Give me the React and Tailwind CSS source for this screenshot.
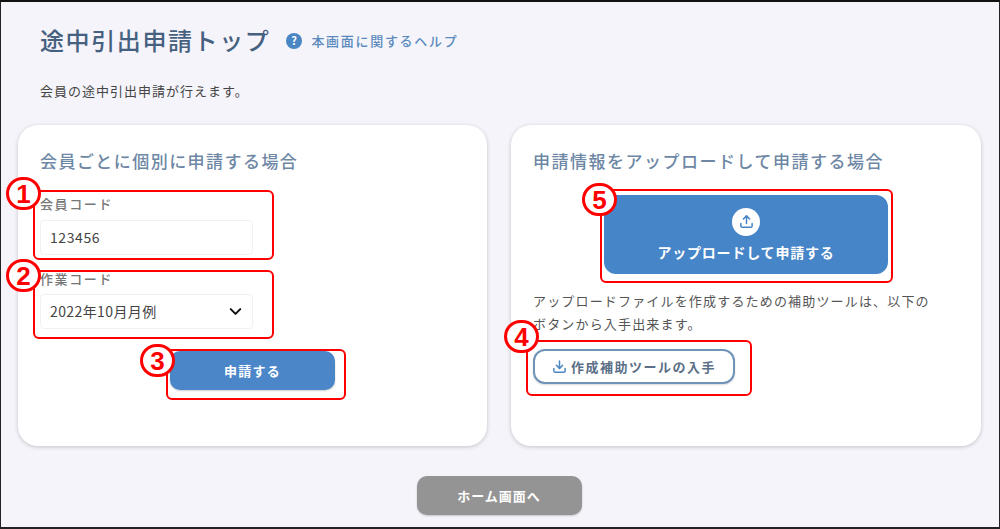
import React from "react";
import { ChevronDown, Download, Upload } from "lucide-react";

const jp = "font-['Noto_Sans_CJK_JP','Noto_Sans',sans-serif]";

// red annotation frames + numbered circles laid over the screenshot
const frames = [
  "left-[33px] top-[190px] w-[241px] h-[70px]",
  "left-[33px] top-[270px] w-[241px] h-[69px]",
  "left-[166px] top-[349px] w-[180px] h-[51px]",
  "left-[600px] top-[189px] w-[293px] h-[94px]",
  "left-[526px] top-[340px] w-[226px] h-[56px]",
];

const badges = [
  { n: "1", pos: "left-[6px] top-[177px]" },
  { n: "2", pos: "left-[6px] top-[259px]" },
  { n: "3", pos: "left-[140px] top-[344px]" },
  { n: "4", pos: "left-[504px] top-[320px]" },
  { n: "5", pos: "left-[582px] top-[183px]" },
];

const App = () => {
  return (
    <div className={`relative w-[1000px] h-[529px] overflow-hidden bg-[#f4f4fa] border-t-2 border-b-2 border-l border-r border-t-[#111] border-b-[#222] border-l-[#222] border-r-[#222] ${jp}`}>
      <div className="flex items-center pl-[39px] pt-[20px] h-[36px] box-content">
        <h1 className="text-[24px] leading-[36px] font-medium tracking-[1.6px] text-[#46607f]">途中引出申請トップ</h1>
        <svg className="ml-[16px] mt-[2px] w-[16px] h-[16px]" viewBox="0 0 16 16">
          <circle cx="8" cy="8" r="8" fill="#4a86c4" />
          <text x="8" y="12" textAnchor="middle" fontSize="11" fontWeight="700" fill="#fff">?</text>
        </svg>
        <a className="ml-[9px] mt-[2px] text-[13px] font-medium tracking-[1.7px] text-[#5a8abd]">本画面に関するヘルプ</a>
      </div>
      <p className="pl-[39px] mt-[23px] text-[13px] leading-[20px] tracking-[1px] text-[#444]">会員の途中引出申請が行えます。</p>

      <div className="flex gap-[24px] pl-[17px] mt-[24px]">
        <section className="w-[469px] h-[321px] bg-white rounded-[20px] shadow-[0_1px_4px_rgba(0,0,0,0.2)] pl-[22px] pt-[22px]">
          <h2 className="text-[17px] leading-[28px] font-medium tracking-[1.45px] text-[#6d87a5]">会員ごとに個別に申請する場合</h2>
          <label className="block mt-[19px] text-[13px] leading-[20px] font-medium tracking-[1.6px] text-[#777]">会員コード</label>
          <div className="mt-[6px] flex items-center w-[213px] h-[35px] px-[9px] rounded-[4px] border border-[#f1f1f3] text-[14px] tracking-[0.6px] text-[#444]">123456</div>
          <label className="block mt-[14px] text-[13px] leading-[20px] font-medium tracking-[1.6px] text-[#777]">作業コード</label>
          <div className="mt-[5px] flex items-center justify-between w-[213px] h-[35px] pl-[9px] pr-[7px] rounded-[4px] border border-[#f1f1f3] text-[14px] tracking-[0.4px] text-[#444]">
            <span>2022年10月月例</span>
            <ChevronDown size={19} strokeWidth={2.6} className="text-[#111]" />
          </div>
          <button className="block mt-[22px] ml-[130px] w-[165px] h-[39px] rounded-[10px] bg-[#4a86c8] text-white text-[13px] font-bold tracking-[1.2px] shadow-[0_1px_2px_rgba(0,0,0,0.2)]">申請する</button>
        </section>

        <section className="w-[470px] h-[321px] bg-white rounded-[20px] shadow-[0_1px_4px_rgba(0,0,0,0.2)] pl-[22px] pt-[22px]">
          <h2 className="text-[17px] leading-[28px] font-medium tracking-[1.5px] text-[#6d87a5]">申請情報をアップロードして申請する場合</h2>
          <button className="mt-[20px] ml-[71px] w-[284px] h-[79px] rounded-[12px] bg-[#4685c8] text-white flex flex-col items-center justify-center">
            <span className="flex items-center justify-center w-[28px] h-[28px] rounded-full bg-white text-[#4685c8]">
              <Upload size={15} strokeWidth={2.4} />
            </span>
            <span className="mt-[6px] text-[14px] leading-[20px] font-bold tracking-[0.8px]">アップロードして申請する</span>
          </button>
          <p className="mt-[15px] w-[420px] text-[13px] leading-[23px] tracking-[1.17px] text-[#555]">アップロードファイルを作成するための補助ツールは、以下の<br />ボタンから入手出来ます。</p>
          <button className="mt-[14px] flex items-center justify-center w-[202px] h-[35px] rounded-[12px] border-2 border-[#6f94b8] bg-white shadow-[0_1px_2px_rgba(0,0,0,0.15)] text-[13px] font-bold tracking-[1.5px] text-[#5b6f86]">
            <Download size={15} strokeWidth={2.4} className="mr-[4px] text-[#4a86c4]" />
            作成補助ツールの入手
          </button>
        </section>
      </div>

      <div className="flex justify-center pr-[2px] mt-[30px]">
        <button className="w-[165px] h-[39px] rounded-[10px] bg-[#949494] text-white text-[13px] font-bold tracking-[1px] shadow-[0_1px_2px_rgba(0,0,0,0.2)]">ホーム画面へ</button>
      </div>

      {frames.map((f) => (
        <div key={f} className={`absolute -mt-[2px] -ml-[1px] rounded-[6px] border-2 border-[#f00] ${f}`} />
      ))}
      {badges.map((b) => (
        <div key={b.n} className={`absolute -mt-[2px] -ml-[1px] w-[35px] h-[33px] rounded-full border-[3px] border-[#f00] bg-white flex items-center justify-center text-[26px] font-bold leading-none text-[#f00] font-['Liberation_Sans',sans-serif] ${b.pos}`}>
          {b.n}
        </div>
      ))}
    </div>
  );
};

export default App;
